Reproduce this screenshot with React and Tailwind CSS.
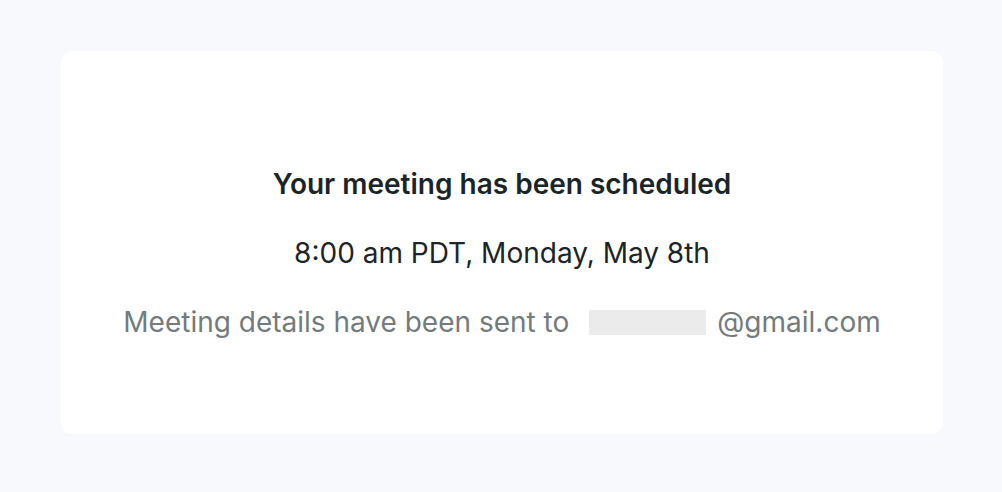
export default function App() {
  return (
    <div className="min-h-[492px] w-full bg-[#f8f9fd] pt-[51px] pl-[61px] pr-[59px]" style={{ fontFamily: "Inter, 'Noto Sans', sans-serif" }}>
      <div className="flex h-[383px] flex-col items-center gap-[33px] rounded-xl bg-white pt-[115px]">
        <h1 className="text-[28px] font-semibold leading-9 text-[#1b2528]">Your meeting has been scheduled</h1>
        <p className="text-[28px] leading-9 text-[#1b2528]">8:00 am PDT, Monday, May 8th</p>
        <p className="flex items-center text-[28px] leading-9 text-[#737b7d]">
          <span>Meeting details have been sent to</span>
          <span className="ml-[20px] mr-[11px] inline-block h-[25px] w-[117px] bg-[#ebebeb]"></span>
          <span>@gmail.com</span>
        </p>
      </div>
    </div>
  );
}
